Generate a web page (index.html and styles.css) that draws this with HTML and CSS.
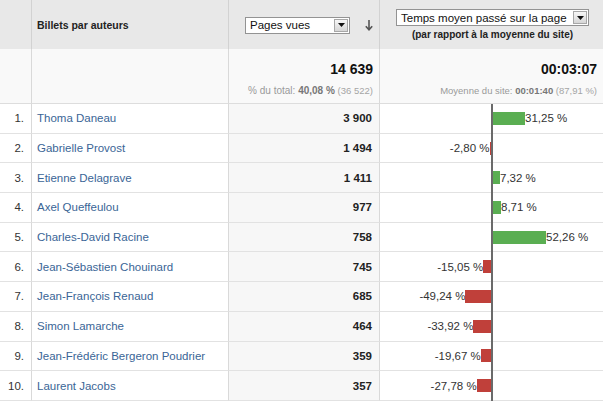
FILE: index.html
```html
<!DOCTYPE html>
<html lang="fr">
<head>
<meta charset="utf-8">
<title>Billets par auteurs</title>
<link rel="stylesheet" href="styles.css">
</head>
<body>
<div class="report">
  <div class="row head">
    <div class="cell"></div>
    <div class="cell name-head">Billets par auteurs</div>
    <div class="cell metric-head">
      <div class="select select-pages"><span class="select-text">Pages vues</span><span class="select-btn"><svg width="7" height="4" viewBox="0 0 7 4"><path d="M0 0H7L3.5 4Z" fill="#111"/></svg></span></div>
      <svg class="sort-arrow" width="8" height="11" viewBox="0 0 8 11"><path d="M4 0V9.5M0.8 6.2L4 9.8L7.2 6.2" fill="none" stroke="#555" stroke-width="1.6"/></svg>
    </div>
    <div class="cell compare-head">
      <div class="select select-time"><span class="select-text">Temps moyen passé sur la page</span><span class="select-btn"><svg width="7" height="4" viewBox="0 0 7 4"><path d="M0 0H7L3.5 4Z" fill="#111"/></svg></span></div>
      <div class="subtitle">(par rapport à la moyenne du site)</div>
    </div>
  </div>
  <div class="row totals">
    <div class="cell"></div>
    <div class="cell"></div>
    <div class="cell total">
      <div class="big">14 639</div>
      <div class="small">% du total: <b>40,08 %</b> <span class="paren">(36 522)</span></div>
    </div>
    <div class="cell total">
      <div class="big">00:03:07</div>
      <div class="small small-avg">Moyenne du site: <b>00:01:40</b> <span class="paren">(87,91 %)</span></div>
    </div>
  </div>

  <div class="row data">
    <div class="cell num">1.</div><div class="cell name">Thoma Daneau</div><div class="cell val">3 900</div>
    <div class="cell bars"><div class="neg"></div><div class="axis"></div><div class="pos"><span class="bar up" style="width:32px"></span><span class="lbl">31,25 %</span></div></div>
  </div>
  <div class="row data">
    <div class="cell num">2.</div><div class="cell name">Gabrielle Provost</div><div class="cell val">1 494</div>
    <div class="cell bars"><div class="neg"><span class="lbl">-2,80 %</span><span class="bar down" style="width:1.5px"></span></div><div class="axis"></div><div class="pos"></div></div>
  </div>
  <div class="row data">
    <div class="cell num">3.</div><div class="cell name">Etienne Delagrave</div><div class="cell val">1 411</div>
    <div class="cell bars"><div class="neg"></div><div class="axis"></div><div class="pos"><span class="bar up" style="width:7px"></span><span class="lbl">7,32 %</span></div></div>
  </div>
  <div class="row data">
    <div class="cell num">4.</div><div class="cell name">Axel Queffeulou</div><div class="cell val">977</div>
    <div class="cell bars"><div class="neg"></div><div class="axis"></div><div class="pos"><span class="bar up" style="width:8px"></span><span class="lbl">8,71 %</span></div></div>
  </div>
  <div class="row data">
    <div class="cell num">5.</div><div class="cell name">Charles-David Racine</div><div class="cell val">758</div>
    <div class="cell bars"><div class="neg"></div><div class="axis"></div><div class="pos"><span class="bar up" style="width:53px"></span><span class="lbl">52,26 %</span></div></div>
  </div>
  <div class="row data">
    <div class="cell num">6.</div><div class="cell name">Jean-Sébastien Chouinard</div><div class="cell val">745</div>
    <div class="cell bars"><div class="neg"><span class="lbl">-15,05 %</span><span class="bar down" style="width:7.8px"></span></div><div class="axis"></div><div class="pos"></div></div>
  </div>
  <div class="row data">
    <div class="cell num">7.</div><div class="cell name">Jean-François Renaud</div><div class="cell val">685</div>
    <div class="cell bars"><div class="neg"><span class="lbl">-49,24 %</span><span class="bar down" style="width:25.6px"></span></div><div class="axis"></div><div class="pos"></div></div>
  </div>
  <div class="row data">
    <div class="cell num">8.</div><div class="cell name">Simon Lamarche</div><div class="cell val">464</div>
    <div class="cell bars"><div class="neg"><span class="lbl">-33,92 %</span><span class="bar down" style="width:17.6px"></span></div><div class="axis"></div><div class="pos"></div></div>
  </div>
  <div class="row data">
    <div class="cell num">9.</div><div class="cell name">Jean-Frédéric Bergeron Poudrier</div><div class="cell val">359</div>
    <div class="cell bars"><div class="neg"><span class="lbl">-19,67 %</span><span class="bar down" style="width:10.2px"></span></div><div class="axis"></div><div class="pos"></div></div>
  </div>
  <div class="row data">
    <div class="cell num">10.</div><div class="cell name">Laurent Jacobs</div><div class="cell val">357</div>
    <div class="cell bars"><div class="neg"><span class="lbl">-27,78 %</span><span class="bar down" style="width:14.4px"></span></div><div class="axis"></div><div class="pos"></div></div>
  </div>
</div>
</body>
</html>
```

FILE: styles.css
```css
html, body {
  margin: 0;
  padding: 0;
  background: #ffffff;
}
body {
  font-family: "Liberation Sans", Arial, sans-serif;
  color: #333333;
  width: 603px;
  height: 404px;
  overflow: hidden;
}
.report {
  display: flex;
  flex-direction: column;
}
.row {
  display: grid;
  grid-template-columns: 32px 197px 151px 223px;
}
.cell {
  box-sizing: border-box;
  border-right: 1px solid #d9d9d9;
  border-bottom: 1px solid #e2e2e2;
}
.cell:last-child {
  border-right: none;
}

/* header */
.head .cell {
  height: 49px;
  background: #e8e8e8;
  border-bottom: none;
  border-right-color: #d2d2d2;
}
.name-head {
  display: flex;
  align-items: center;
  padding: 1px 0 0 5px;
  font-size: 10.5px;
  font-weight: bold;
  color: #222222;
}
.metric-head {
  display: flex;
  align-items: center;
  justify-content: flex-end;
  padding: 1px 6px 0 0;
  gap: 15px;
}
.compare-head {
  display: flex;
  flex-direction: column;
  align-items: center;
  padding-top: 9px;
  padding-left: 2px;
}
.select {
  box-sizing: border-box;
  display: flex;
  align-items: center;
  justify-content: space-between;
  height: 17px;
  background: #ffffff;
  border: 1px solid #939393;
  padding-left: 4px;
  font-size: 11.5px;
  color: #111111;
}
.select-pages {
  width: 105px;
}
.select-time {
  width: 193px;
}
.select-btn {
  box-sizing: border-box;
  display: flex;
  align-items: center;
  justify-content: center;
  width: 14px;
  height: 13px;
  margin-right: 1px;
  border: 1px solid #a7a7a7;
  background: linear-gradient(#f7f7f7, #d6d6d6);
}
.sort-arrow {
  display: block;
}
.subtitle {
  margin-top: 3px;
  font-size: 10px;
  font-weight: bold;
  color: #222222;
  line-height: 12px;
}

/* totals */
.totals .cell {
  height: 55px;
  background: #f9f9f9;
  border-bottom-color: #dddddd;
}
.total {
  display: flex;
  flex-direction: column;
  align-items: flex-end;
  padding: 12px 6px 0 0;
}
.big {
  font-size: 14px;
  font-weight: bold;
  color: #111111;
  line-height: 16px;
}
.small {
  margin-top: 8px;
  font-size: 10px;
  line-height: 12px;
  color: #9a9a9a;
  white-space: nowrap;
}
.small-avg {
  font-size: 9.5px;
}
.small b {
  color: #777777;
}
.paren {
  font-size: 9.5px;
  color: #a5a5a5;
}

/* data rows */
.data .cell {
  height: 29.7px;
  display: flex;
  align-items: center;
  font-size: 11.5px;
}
.num {
  justify-content: flex-end;
  padding-right: 7px;
  color: #333333;
}
.name {
  padding-left: 5px;
  color: #3a6596;
  white-space: nowrap;
}
.val {
  justify-content: flex-end;
  padding-right: 7px;
  font-weight: bold;
  color: #222222;
  background: #f7f7f7;
}
.bars {
  align-items: center;
}
.neg {
  width: 111px;
  flex: none;
  display: flex;
  justify-content: flex-end;
  align-items: center;
}
.axis {
  flex: none;
  align-self: flex-start;
  width: 2px;
  height: calc(100% + 1px);
  background: #6a6a6a;
}
.pos {
  display: flex;
  align-items: center;
}
.bar {
  display: block;
  height: 13px;
  flex: none;
}
.bar.up {
  background: #5aae52;
}
.bar.down {
  background: #c0403a;
}
.lbl {
  color: #333333;
  white-space: nowrap;
}
```
